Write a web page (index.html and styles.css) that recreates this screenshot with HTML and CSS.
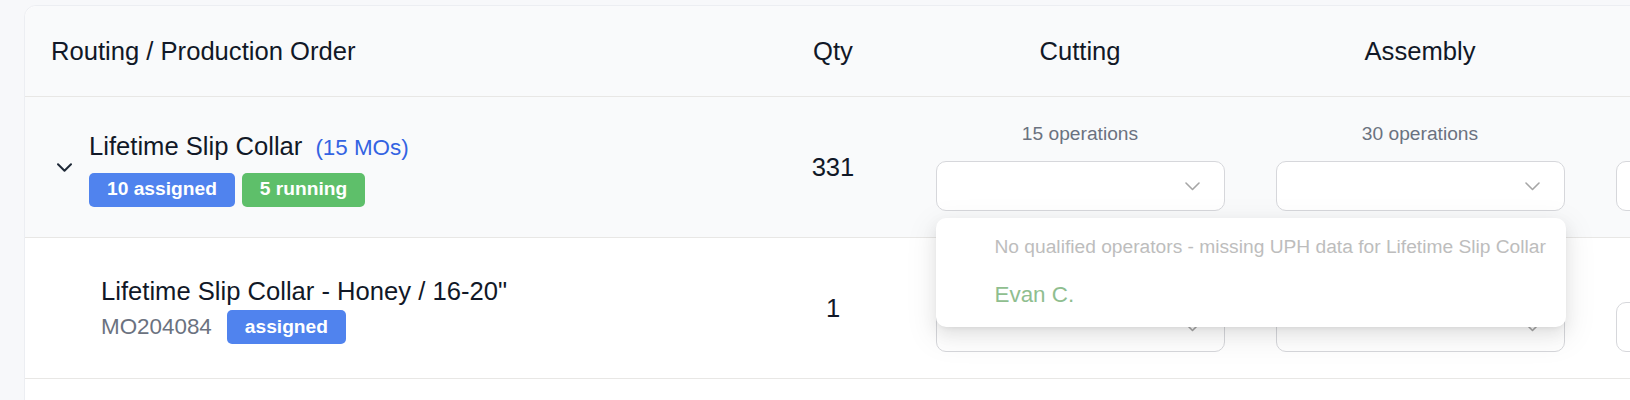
FILE: index.html
```html
<!DOCTYPE html>
<html lang="en">
<head>
<meta charset="utf-8">
<title>Routing</title>
<link rel="stylesheet" href="styles.css">
</head>
<body>
<div class="card">
  <div class="row head">
    <div class="cell name">Routing / Production Order</div>
    <div class="cell center">Qty</div>
    <div class="cell center">Cutting</div>
    <div class="cell center">Assembly</div>
    <div class="cell center"></div>
  </div>

  <div class="row group">
    <div class="cell name">
      <span class="toggle"><svg width="15" height="9" viewBox="0 0 15 9"><path d="M1 1.2l6.5 6.5L14 1.2" fill="none" stroke="#1f2937" stroke-width="2" stroke-linecap="round" stroke-linejoin="round"/></svg></span>
      <div class="info">
        <div class="title-line"><span class="title">Lifetime Slip Collar</span><span class="count">(15 MOs)</span></div>
        <div class="badges"><span class="badge blue">10 assigned</span><span class="badge green">5 running</span></div>
      </div>
    </div>
    <div class="cell center qty">331</div>
    <div class="cell stage">
      <div class="ops">15 operations</div>
      <div class="select-wrap">
        <div class="select"><svg width="15" height="9" viewBox="0 0 15 9"><path d="M1 1l6.5 6.5L14 1" fill="none" stroke="#a6a6a6" stroke-width="1.6" stroke-linecap="round" stroke-linejoin="round"/></svg></div>
        <div class="dropdown">
          <div class="option muted">No qualified operators - missing UPH data for Lifetime Slip Collar</div>
          <div class="option operator">Evan C.</div>
        </div>
      </div>
    </div>
    <div class="cell stage">
      <div class="ops">30 operations</div>
      <div class="select-wrap">
        <div class="select"><svg width="15" height="9" viewBox="0 0 15 9"><path d="M1 1l6.5 6.5L14 1" fill="none" stroke="#a6a6a6" stroke-width="1.6" stroke-linecap="round" stroke-linejoin="round"/></svg></div>
      </div>
    </div>
    <div class="cell stage">
      <div class="ops">&nbsp;</div>
      <div class="select-wrap">
        <div class="select"><svg width="15" height="9" viewBox="0 0 15 9"><path d="M1 1l6.5 6.5L14 1" fill="none" stroke="#a6a6a6" stroke-width="1.6" stroke-linecap="round" stroke-linejoin="round"/></svg></div>
      </div>
    </div>
  </div>

  <div class="row child">
    <div class="cell name sub">
      <div class="info">
        <div class="title-line"><span class="title">Lifetime Slip Collar - Honey / 16-20"</span></div>
        <div class="meta"><span class="mo">MO204084</span><span class="badge blue">assigned</span></div>
      </div>
    </div>
    <div class="cell center qty">1</div>
    <div class="cell stage">
      <div class="ops">&nbsp;</div>
      <div class="select-wrap">
        <div class="select"><svg width="15" height="9" viewBox="0 0 15 9"><path d="M1 1l6.5 6.5L14 1" fill="none" stroke="#a6a6a6" stroke-width="1.6" stroke-linecap="round" stroke-linejoin="round"/></svg></div>
      </div>
    </div>
    <div class="cell stage">
      <div class="ops">&nbsp;</div>
      <div class="select-wrap">
        <div class="select"><svg width="15" height="9" viewBox="0 0 15 9"><path d="M1 1l6.5 6.5L14 1" fill="none" stroke="#a6a6a6" stroke-width="1.6" stroke-linecap="round" stroke-linejoin="round"/></svg></div>
      </div>
    </div>
    <div class="cell stage">
      <div class="ops">&nbsp;</div>
      <div class="select-wrap">
        <div class="select"><svg width="15" height="9" viewBox="0 0 15 9"><path d="M1 1l6.5 6.5L14 1" fill="none" stroke="#a6a6a6" stroke-width="1.6" stroke-linecap="round" stroke-linejoin="round"/></svg></div>
      </div>
    </div>
  </div>

  <div class="row child last">
    <div class="cell name sub"></div>
    <div class="cell center qty"></div>
    <div class="cell stage"></div>
    <div class="cell stage"></div>
    <div class="cell stage"></div>
  </div>
</div>
</body>
</html>
```

FILE: styles.css
```css
html, body {
  margin: 0;
  padding: 0;
  overflow: hidden;
  background: #f7f8fa;
  font-family: "Liberation Sans", Arial, Helvetica, sans-serif;
  color: #111827;
}

.card {
  margin: 5px 0 0 24px;
  width: max-content;
  background: #ffffff;
  border: 1px solid #eceef2;
  border-radius: 12px;
}

.row {
  display: grid;
  grid-template-columns: 731px 154px 340px 340px 340px;
  border-bottom: 1px solid #e8e7e5;
}

.head {
  height: 90px;
  background: #f9fafb;
  border-radius: 12px 12px 0 0;
  font-size: 25.6px;
}

.group {
  height: 140px;
  background: #f9fafb;
}

.child {
  height: 140px;
  background: #ffffff;
}

.cell {
  display: flex;
  align-items: center;
}

.cell.center {
  justify-content: center;
}

.name {
  padding-left: 26px;
}

.name.sub {
  padding-left: 76px;
}

.toggle {
  width: 26px;
  display: flex;
  justify-content: center;
  margin-right: 12px;
  margin-top: 1px;
}

.info {
  display: flex;
  flex-direction: column;
}

.title-line {
  display: flex;
  align-items: baseline;
  line-height: 38.4px;
}

.title {
  font-size: 25.6px;
}

.count {
  font-size: 22.4px;
  color: #3463e2;
  margin-left: 13px;
}

.badges {
  display: flex;
  gap: 7px;
  margin-top: 5px;
}

.meta {
  display: flex;
  align-items: center;
  gap: 15px;
}

.mo {
  font-size: 22.4px;
  color: #6b7280;
}

.badge {
  display: inline-block;
  font-size: 19.2px;
  font-weight: bold;
  line-height: 28.8px;
  padding: 2.5px 18px;
  border-radius: 5px;
  color: #ffffff;
}

.badge.blue {
  background: #5083ee;
}

.badge.green {
  background: #5ebf6a;
}

.qty {
  font-size: 25.6px;
}

.stage {
  flex-direction: column;
  justify-content: center;
}

.ops {
  font-size: 19.2px;
  line-height: 22px;
  color: #6b7280;
  margin-bottom: 16px;
}

.select-wrap {
  position: relative;
}

.select {
  box-sizing: border-box;
  width: 289px;
  height: 50px;
  background: #ffffff;
  border: 1px solid #d6d7db;
  border-radius: 10px;
  display: flex;
  align-items: center;
  justify-content: flex-end;
  padding-right: 24px;
}

.dropdown {
  position: absolute;
  left: 0;
  top: calc(100% + 7px);
  width: 630px;
  box-sizing: border-box;
  padding: 5px 0 8px;
  background: #ffffff;
  border-radius: 10px;
  box-shadow: 0 6px 16px 0 rgba(0, 0, 0, 0.08), 0 3px 6px -4px rgba(0, 0, 0, 0.12), 0 9px 28px 8px rgba(0, 0, 0, 0.05);
  z-index: 10;
}

.option {
  height: 48px;
  display: flex;
  align-items: center;
  padding-left: 59px;
  white-space: nowrap;
}

.option.muted {
  font-size: 19.2px;
  color: #bdbdbd;
}

.option.operator {
  font-size: 22.4px;
  color: #8fbe8f;
}
```
